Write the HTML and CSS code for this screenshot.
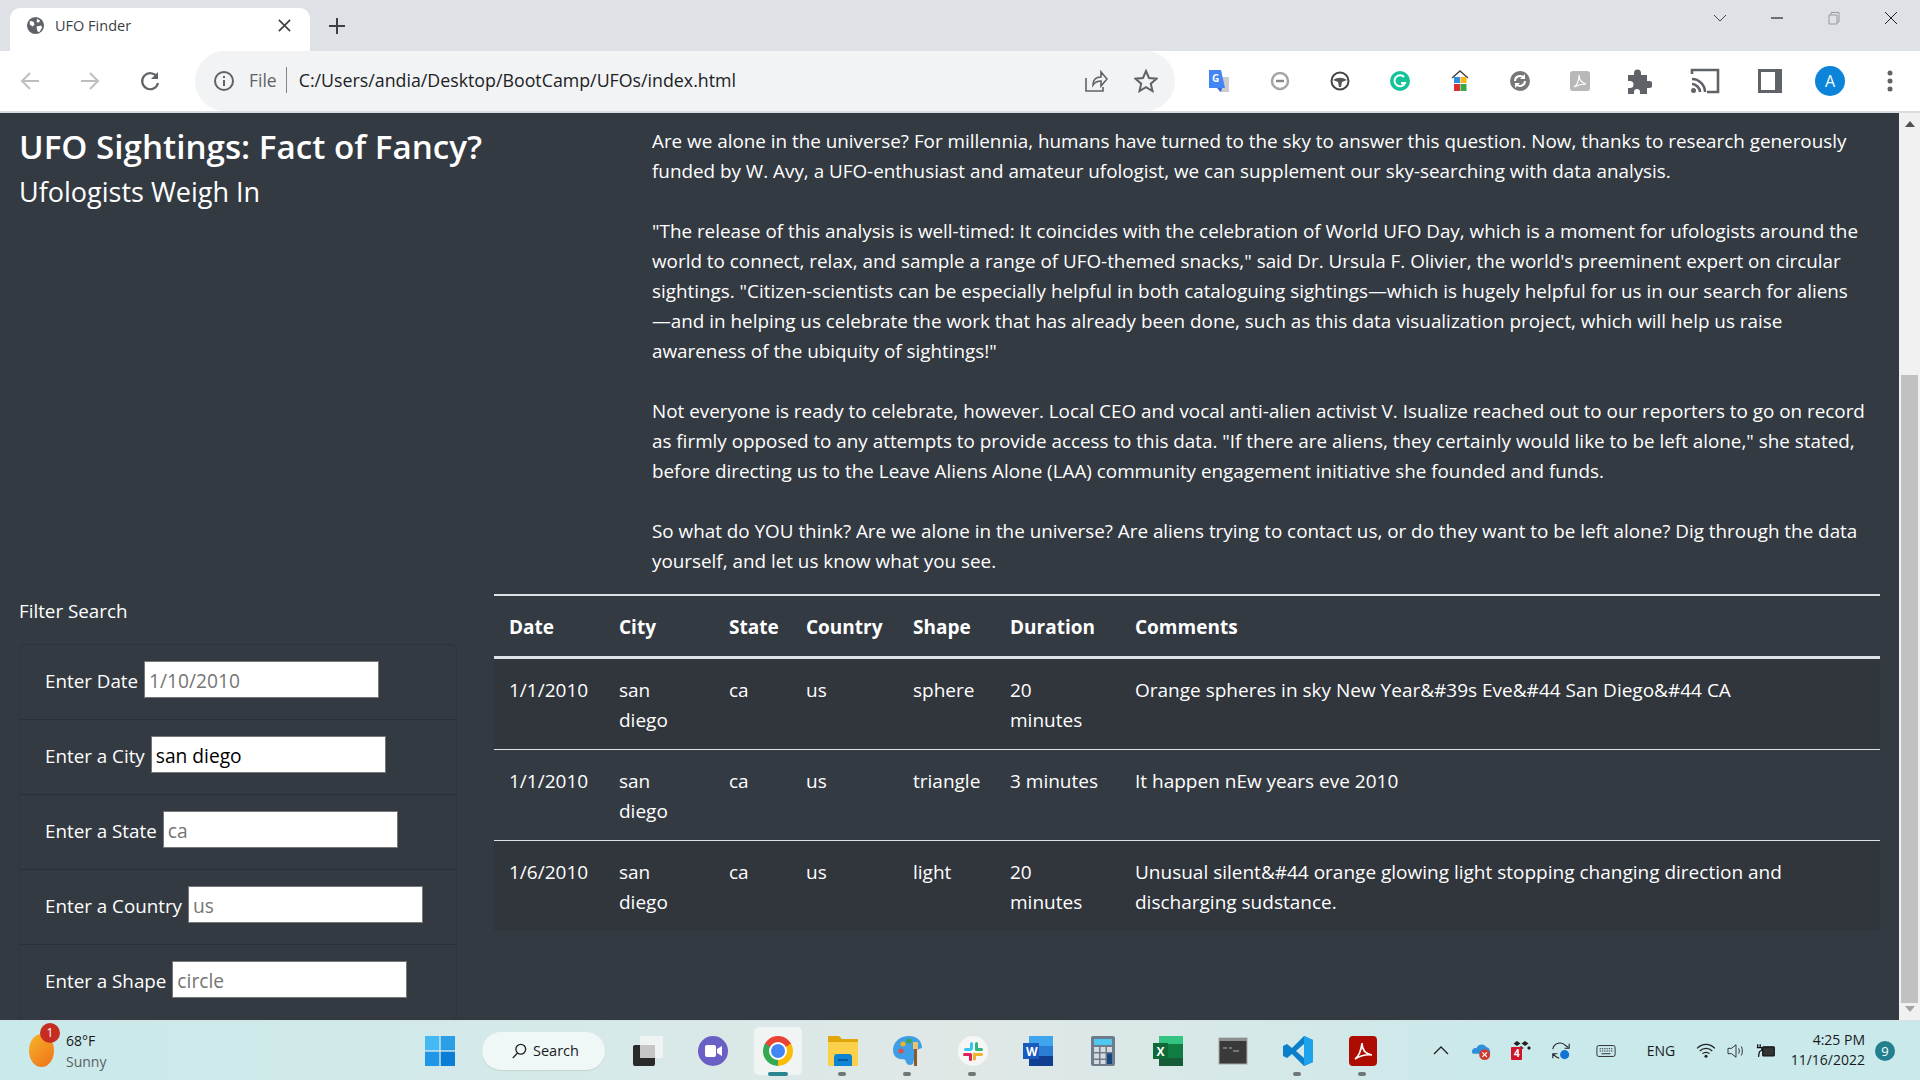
FILE: index.html
```html
<!DOCTYPE html>
<html lang="en">
<head>
    <meta charset="UTF-8">
    <title>UFO Finder</title>
    <link rel="stylesheet" href="styles.css">
</head>
<body>
    <div class="tabstrip">
        <div class="tab">
            <svg class="tab-icon" viewBox="0 0 20 20"><circle cx="10" cy="10" r="9" fill="#5f6368"/><path d="M4 5l4 1 1 3-2 2-3-2zM12 3l3 2-2 2-2-1zM11 11l5-1 1 2-3 5-2-1z" fill="#fff"/></svg>
            <span class="tab-title">UFO Finder</span>
            <svg class="tab-close" viewBox="0 0 16 16"><path d="M2 2l12 12M14 2L2 14" stroke="#3c4043" stroke-width="1.7" fill="none"/></svg>
        </div>
        <svg class="new-tab" viewBox="0 0 18 18"><path d="M9 1v16M1 9h16" stroke="#3c4043" stroke-width="2" fill="none"/></svg>
        <div class="window-controls">
            <svg viewBox="0 0 14 14"><path d="M1 4l6 6 6-6" stroke="#444" fill="none"/></svg>
            <svg viewBox="0 0 14 14"><path d="M1 7h12" stroke="#222" stroke-width="1.2" fill="none"/></svg>
            <svg viewBox="0 0 14 14"><path d="M2 4h8v9H2zM4 4V1.500h8V11h-2" stroke="#999" fill="none"/></svg>
            <svg viewBox="0 0 14 14"><path d="M1 1l12 12M13 1L1 13" stroke="#222" fill="none"/></svg>
        </div>
    </div>

    <div class="toolbar">
        <div class="nav-buttons">
            <svg viewBox="0 0 22 22"><path d="M20 11H3M11 3l-8 8 8 8" stroke="#bdbfc2" stroke-width="2" fill="none"/></svg>
            <svg viewBox="0 0 22 22"><path d="M2 11h17M11 3l8 8-8 8" stroke="#bdbfc2" stroke-width="2" fill="none"/></svg>
            <svg viewBox="0 0 22 22"><path d="M18 7a8 8 0 1 0 1 6" stroke="#5f6368" stroke-width="2.200" fill="none"/><path d="M19 2v7h-7z" fill="#5f6368"/></svg>
        </div>
        <div class="omnibox">
            <svg class="info-icon" viewBox="0 0 22 22"><circle cx="11" cy="11" r="9" stroke="#5f6368" stroke-width="2" fill="none"/><path d="M11 10v6M11 6v2" stroke="#5f6368" stroke-width="2"/></svg>
            <span class="omni-file">File</span>
            <span class="omni-url">C:/Users/andia/Desktop/BootCamp/UFOs/index.html</span>
            <svg class="omni-share" viewBox="0 0 24 24"><path d="M2 9v13h17v-4M9 16c0-6 4-8 8-8V3l6 7-6 7v-5c-3 0-6 1-8 4z" stroke="#5f6368" stroke-width="1.600" fill="none"/></svg>
            <svg class="omni-star" viewBox="0 0 24 24"><path d="M12 2l3 7 7.500.7-5.700 5 1.700 7.300-6.500-3.900L5.500 22l1.700-7.300-5.700-5L9 9z" stroke="#5f6368" stroke-width="2" fill="none"/></svg>
        </div>
        <div class="extensions">
            <svg viewBox="0 0 24 24"><path d="M10 8h12v15H12z" fill="#ccc"/><path d="M2 1h12l4 18H2z" fill="#4285f4"/><path d="M10 19l4 4 1-4z" fill="#3367d6"/><text x="5" y="13" class="ext-letter">G</text></svg>
            <svg viewBox="0 0 24 24"><circle cx="12" cy="12" r="8" stroke="#a5a5a5" stroke-width="2.500" fill="none"/><path d="M8 12h8" stroke="#888" stroke-width="2.500"/></svg>
            <svg viewBox="0 0 24 24"><circle cx="12" cy="12" r="8.500" stroke="#444" stroke-width="2" fill="#fff"/><path d="M5 11c5-3 9-3 14 0l-5 2-1 5h-2l-1-5z" fill="#555"/></svg>
            <svg viewBox="0 0 24 24"><circle cx="12" cy="12" r="10" fill="#15c39a"/><path d="M16 8a5.500 5.500 0 1 0 1 6h-4" stroke="#fff" stroke-width="2" fill="none"/></svg>
            <svg viewBox="0 0 24 24"><path d="M4 9l8-7 8 7" stroke="#444" stroke-width="1.500" fill="none"/><rect x="6" y="8" width="6" height="6" fill="#2a8fe0"/><rect x="12.500" y="8" width="6" height="6" fill="#f5b51b"/><rect x="6" y="15" width="6" height="7" fill="#d9302c"/><rect x="12.500" y="15" width="6" height="7" fill="#3aa64a"/></svg>
            <svg viewBox="0 0 24 24"><circle cx="12" cy="12" r="10" fill="#777"/><path d="M7 12a5 5 0 0 1 9-3M17 12a5 5 0 0 1-9 3" stroke="#fff" stroke-width="2" fill="none"/><path d="M17 5v5h-5zM7 19v-5h5z" fill="#fff"/></svg>
            <svg viewBox="0 0 24 24"><rect x="2" y="2" width="20" height="20" rx="3" fill="#b8b8b8"/><path d="M6 18c3-2 5-7 5-12 0 5 3 8 7 9-4 0-8 1-12 3z" stroke="#fff" stroke-width="1.200" fill="none"/></svg>
            <svg viewBox="0 0 28 28"><path d="M4 8h6V6a3.500 3.500 0 0 1 7 0v2h6v6h2a3.500 3.500 0 0 1 0 7h-2v6h-7v-2a3 3 0 0 0-6 0v2H4v-6h2a3.500 3.500 0 0 0 0-7H4z" fill="#5f6368"/></svg>
            <svg viewBox="0 0 30 28"><path d="M2 7V3h26v22H17M2 12c7 0 13 6 13 13M2 17c4 0 8 4 8 8" stroke="#5f6368" stroke-width="2.600" fill="none"/><circle cx="3.500" cy="23.500" r="2.500" fill="#5f6368"/></svg>
            <svg viewBox="0 0 28 28"><path d="M2 2h24v24H2z" fill="#5f6368"/><rect x="5" y="5" width="14" height="18" fill="#fff"/></svg>
            <div class="avatar">A</div>
            <svg viewBox="0 0 24 24"><circle cx="12" cy="4" r="2.500" fill="#5f6368"/><circle cx="12" cy="12" r="2.500" fill="#5f6368"/><circle cx="12" cy="20" r="2.500" fill="#5f6368"/></svg>
        </div>
    </div>

    <div class="viewport">
        <main class="page">
            <section class="intro-row">
                <header class="intro-title">
                    <h1>UFO Sightings: Fact of Fancy?</h1>
                    <h2>Ufologists Weigh In</h2>
                </header>
                <article class="article">
                    <p>Are we alone in the universe? For millennia, humans have turned to the sky to answer this question. Now, thanks to research generously funded by W. Avy, a UFO-enthusiast and amateur ufologist, we can supplement our sky-searching with data analysis.</p>
                    <p>"The release of this analysis is well-timed: It coincides with the celebration of World UFO Day, which is a moment for ufologists around the world to connect, relax, and sample a range of UFO-themed snacks," said Dr. Ursula F. Olivier, the world's preeminent expert on circular sightings. "Citizen-scientists can be especially helpful in both cataloguing sightings—which is hugely helpful for us in our search for aliens<br>—and in helping us celebrate the work that has already been done, such as this data visualization project, which will help us raise<br>awareness of the ubiquity of sightings!"</p>
                    <p>Not everyone is ready to celebrate, however. Local CEO and vocal anti-alien activist V. Isualize reached out to our reporters to go on record as firmly opposed to any attempts to provide access to this data. "If there are aliens, they certainly would like to be left alone," she stated, before directing us to the Leave Aliens Alone (LAA) community engagement initiative she founded and funds.</p>
                    <p>So what do YOU think? Are we alone in the universe? Are aliens trying to contact us, or do they want to be left alone? Dig through the data yourself, and let us know what you see.</p>
                </article>
            </section>

            <section class="data-row">
                <aside class="filters">
                    <div class="filters-title">Filter Search</div>
                    <ul class="filter-list">
                        <li><label for="date">Enter Date</label><input id="date" type="text" placeholder="1/10/2010"></li>
                        <li><label for="city">Enter a City</label><input id="city" type="text" value="san diego"></li>
                        <li><label for="state">Enter a State</label><input id="state" type="text" placeholder="ca"></li>
                        <li><label for="country">Enter a Country</label><input id="country" type="text" placeholder="us"></li>
                        <li><label for="shape">Enter a Shape</label><input id="shape" type="text" placeholder="circle"></li>
                    </ul>
                </aside>
                <div class="table-wrap">
                    <table class="ufo-table">
                        <colgroup>
                            <col class="col-date"><col class="col-city"><col class="col-state"><col class="col-country"><col class="col-shape"><col class="col-duration"><col>
                        </colgroup>
                        <thead>
                            <tr><th>Date</th><th>City</th><th>State</th><th>Country</th><th>Shape</th><th>Duration</th><th>Comments</th></tr>
                        </thead>
                        <tbody>
                            <tr><td>1/1/2010</td><td>san diego</td><td>ca</td><td>us</td><td>sphere</td><td>20 minutes</td><td>Orange spheres in sky New Year&amp;#39s Eve&amp;#44 San Diego&amp;#44 CA</td></tr>
                            <tr><td>1/1/2010</td><td>san diego</td><td>ca</td><td>us</td><td>triangle</td><td>3 minutes</td><td>It happen nEw years eve 2010</td></tr>
                            <tr><td>1/6/2010</td><td>san diego</td><td>ca</td><td>us</td><td>light</td><td>20 minutes</td><td>Unusual silent&amp;#44 orange glowing light stopping changing direction and discharging sudstance.</td></tr>
                        </tbody>
                    </table>
                </div>
            </section>
        </main>
        <div class="scrollbar">
            <span class="arrow-up"></span>
            <div class="scroll-track"><div class="scroll-thumb"></div></div>
            <span class="arrow-down"></span>
        </div>
    </div>

    <footer class="taskbar">
        <div class="weather">
            <div class="weather-icon"><span class="weather-badge">1</span></div>
            <div class="weather-text">
                <div>68°F</div>
                <div class="weather-sub">Sunny</div>
            </div>
        </div>
        <div class="task-slot">
            <svg class="task-icon" viewBox="0 0 30 30"><rect x="0" y="0" width="14.300" height="14.300" fill="#45b9f3"/><rect x="15.700" y="0" width="14.300" height="14.300" fill="#2a9fe8"/><rect x="0" y="15.700" width="14.300" height="14.300" fill="#1f97e6"/><rect x="15.700" y="15.700" width="14.300" height="14.300" fill="#0a7dd6"/></svg>
        </div>
        <div class="search-pill">
            <svg viewBox="0 0 18 18"><circle cx="11" cy="7" r="5.500" stroke="#222" stroke-width="1.500" fill="none"/><path d="M7 11.500L2 17" stroke="#222" stroke-width="1.600"/></svg>
            <span>Search</span>
        </div>
        <div class="task-slot">
            <svg class="task-icon" viewBox="0 0 30 30"><rect x="0" y="9" width="22" height="21" rx="2" fill="#2a2a2a"/><rect x="7" y="0" width="23" height="22" fill="#f0f3f3"/><rect x="7" y="9" width="15" height="13" fill="#c6c6c6"/></svg>
        </div>
        <div class="task-slot">
            <svg class="task-icon" viewBox="0 0 30 30"><circle cx="15" cy="15" r="15" fill="#6a5fc4"/><rect x="7" y="9" width="11" height="12" rx="2" fill="#fff"/><path d="M19 13l5-3v10l-5-3z" fill="#fff"/></svg>
        </div>
        <div class="task-slot is-active">
            <div class="chrome-logo"></div>
            <span class="task-bar"></span>
        </div>
        <div class="task-slot">
            <svg class="task-icon" viewBox="0 0 30 30"><path d="M0 0h11l3 3h16v27H0z" fill="#e0a60c"/><rect x="0" y="6" width="30" height="24" fill="#fbd04b"/><path d="M6 30V21a3 3 0 0 1 3-3h12a3 3 0 0 1 3 3v9z" fill="#0f83d4"/><rect x="10" y="23" width="10" height="2" fill="#055c9d"/></svg>
            <span class="task-dot"></span>
        </div>
        <div class="task-slot">
            <svg class="task-icon" viewBox="0 0 30 30"><path d="M16 0c9 0 13 6 13 12l-6 2-3 14c-3 2-6 1-7-2-1-4-3-2-6-3-5-1-7-5-7-9C0 6 7 0 16 0z" fill="#3e9fe6"/><circle cx="8" cy="15" r="2.500" fill="#e8493d"/><circle cx="10" cy="8" r="2.500" fill="#f2b31b"/><circle cx="16" cy="5" r="2.500" fill="#3aa64a"/><rect x="21" y="12" width="3" height="18" fill="#8a5a2b"/><rect x="20" y="6" width="5" height="7" fill="#e9c46a"/></svg>
            <span class="task-dot"></span>
        </div>
        <div class="task-slot">
            <svg class="task-icon" viewBox="0 0 30 30"><circle cx="15" cy="15" r="15" fill="#f6f6f6"/><rect x="12" y="6" width="3" height="8" rx="1.500" fill="#36c5f0"/><rect x="6" y="12" width="8" height="3" rx="1.500" fill="#36c5f0"/><rect x="17" y="6" width="3" height="8" rx="1.500" fill="#2eb67d"/><rect x="17" y="12" width="8" height="3" rx="1.500" fill="#2eb67d"/><rect x="15" y="16.500" width="3" height="8" rx="1.500" fill="#ecb22e"/><rect x="17" y="17" width="8" height="3" rx="1.500" fill="#ecb22e"/><rect x="11" y="17" width="3" height="8" rx="1.500" fill="#e01e5a"/><rect x="5" y="17" width="8" height="3" rx="1.500" fill="#e01e5a"/></svg>
            <span class="task-dot"></span>
        </div>
        <div class="task-slot">
            <svg class="task-icon" viewBox="0 0 30 30"><rect x="6" y="0" width="24" height="10" fill="#41a5ee"/><rect x="6" y="10" width="24" height="10" fill="#2b7cd3"/><rect x="6" y="20" width="24" height="10" fill="#103f91"/><rect x="0" y="7" width="16" height="16" fill="#185abd"/><text x="3" y="20" class="tile-letter">W</text></svg>
        </div>
        <div class="task-slot">
            <svg class="task-icon" viewBox="0 0 24 30"><rect width="24" height="30" rx="2" fill="#6e7b8a"/><rect x="3" y="3" width="18" height="6" fill="#4fc7f0"/><path d="M3 11h5v5H3zM9.500 11h5v5h-5zM16 11h5v5h-5zM3 17.500h5v5H3zM9.500 17.500h5v5h-5zM3 24h5v4H3zM9.500 24h5v4h-5z" fill="#d5dade"/><rect x="16" y="17.500" width="5" height="10.500" fill="#14497f"/></svg>
        </div>
        <div class="task-slot">
            <svg class="task-icon" viewBox="0 0 30 30"><rect x="6" y="0" width="24" height="8" fill="#33c481"/><rect x="6" y="8" width="24" height="15" fill="#107c41"/><rect x="6" y="22" width="24" height="8" fill="#185c37"/><rect x="0" y="7" width="15" height="16" fill="#0e6b38"/><text x="3.500" y="20" class="tile-letter">X</text></svg>
        </div>
        <div class="task-slot">
            <svg class="task-icon" viewBox="0 0 30 30"><rect x="1" y="2" width="28" height="26" fill="#3a3a3a" stroke="#a8a8a8"/><rect x="1" y="2" width="28" height="3" fill="#8e8e8e"/><path d="M5 12h4M11 12h3M15 15h6" stroke="#888" stroke-width="1.400"/></svg>
        </div>
        <div class="task-slot">
            <svg class="task-icon" viewBox="0 0 30 30"><path d="M21 0l9 4v22l-9 4-12-12-5 4-4-2V10l4-2 5 4zM21 8l-8 7 8 7z" fill="#0a7fcc"/><path d="M21 0l9 4v22l-9 4z" fill="#1ca3ec"/></svg>
            <span class="task-dot"></span>
        </div>
        <div class="task-slot">
            <svg class="task-icon" viewBox="0 0 30 30"><rect width="28" height="30" x="1" rx="4" fill="#ae0c00"/><path d="M7 23c3-2 6-8 7-16 0 7 4 11 10 12-6-1-12 1-17 4z" stroke="#fff" stroke-width="1.700" fill="none"/></svg>
            <span class="task-dot"></span>
        </div>

        <div class="tray">
            <svg class="tray-icon" viewBox="0 0 20 20"><path d="M3 13l7-7 7 7" stroke="#222" stroke-width="1.300" fill="none"/></svg>
            <svg class="tray-icon" viewBox="0 0 22 20"><path d="M1 11c0-3 3-5 5-4 1-5 9-6 11-1 2 0 4 2 4 5v2H2z" fill="#2f8fdd"/><circle cx="15" cy="14" r="6" fill="#d03a2f"/><path d="M12.500 11.500l5 5M17.500 11.500l-5 5" stroke="#fff" stroke-width="1.300"/></svg>
            <svg class="tray-icon" viewBox="0 0 20 20"><path d="M6 0l3.500 2.500L6 5 2.500 2.500zM14 0l3.500 2.500L14 5l-3.500-2.500zM10 5l2.500 2L10 9 7.500 7zM18 5l2 2-2 2-2-2z" fill="#222"/><rect x="0" y="6" width="11" height="13" rx="1" fill="#d0142c"/><text x="3" y="16" class="tray-four">4</text></svg>
            <svg class="tray-icon" viewBox="0 0 22 22"><path d="M2 9a8 8 0 0 1 14-4l3 2M20 3v5h-5" stroke="#222" stroke-width="1.200" fill="none"/><path d="M2 19v-5h5M2 14l3 3 4 2" stroke="#222" stroke-width="1.200" fill="none"/><circle cx="15" cy="15" r="5" fill="#1173d4"/></svg>
            <svg class="tray-icon tray-wide" viewBox="0 0 22 14"><rect x="1" y="1" width="20" height="12" rx="2" stroke="#222" fill="none"/><path d="M4 4.500h14M4 7h14" stroke="#222" stroke-dasharray="1.500 1"/><path d="M6 10h10" stroke="#222"/></svg>
            <span class="tray-lang">ENG</span>
            <svg class="tray-small" viewBox="0 0 22 18"><path d="M1 6c6-6 14-6 20 0M4 9c4-4 10-4 14 0M7 12c2-2 6-2 8 0" stroke="#222" stroke-width="1.400" fill="none"/><circle cx="11" cy="15" r="1.700" fill="#222"/></svg>
            <svg class="tray-small" viewBox="0 0 22 18"><path d="M2 6h4l5-4v14l-5-4H2z" stroke="#222" fill="none"/><path d="M14 6c1 2 1 4 0 6M17 4c1.500 3 1.500 7 0 10" stroke="#222" fill="none"/></svg>
            <svg class="tray-small" viewBox="0 0 24 18"><rect x="8" y="4" width="14" height="11" rx="1" stroke="#111" stroke-width="1.300" fill="#333"/><path d="M5 1v4M2 1v4M1 5h6v3l-3 2-1 6" stroke="#111" stroke-width="1.500" fill="none"/></svg>
            <div class="clock">
                <div>4:25 PM</div>
                <div>11/16/2022</div>
            </div>
            <div class="notif">9</div>
        </div>
    </footer>
</body>
</html>
```

FILE: styles.css
```css
* {
    box-sizing: border-box;
}
html, body {
    height: 100%;
}
body {
    margin: 0;
    display: flex;
    flex-direction: column;
    overflow: hidden;
    font-family: "Open Sans", "Noto Sans", sans-serif;
    background-color: #343a42;
    color: #fff;
}
svg {
    display: block;
    flex: none;
}

/* browser chrome */
.tabstrip {
    height: 51px;
    flex: none;
    display: flex;
    align-items: center;
    background-color: #dee1e6;
    padding-left: 10px;
}
.tab {
    width: 300px;
    height: 43px;
    margin-top: 8px;
    padding: 0 18px 8px 16px;
    display: flex;
    align-items: center;
    background: #fff;
    border-radius: 10px 10px 0 0;
}
.tab-icon {
    width: 19px;
    height: 19px;
    margin-right: 10px;
}
.tab-title {
    flex: 1;
    font-size: 14.500px;
    color: #3c4043;
}
.tab-close {
    width: 15px;
    height: 15px;
}
.new-tab {
    width: 18px;
    height: 18px;
    margin-left: 18px;
}
.window-controls {
    margin-left: auto;
    display: flex;
    gap: 43px;
    padding-right: 22px;
    margin-top: -15px;
}
.window-controls svg {
    width: 14px;
    height: 14px;
}
.toolbar {
    height: 62px;
    flex: none;
    display: flex;
    background: #fff;
    border-bottom: 2px solid #dadce0;
}
.nav-buttons {
    width: 195px;
    padding-left: 19px;
    display: flex;
    align-items: center;
    gap: 38px;
}
.nav-buttons svg {
    width: 22px;
    height: 22px;
}
.omnibox {
    width: 980px;
    display: flex;
    align-items: center;
    padding: 0 17px 0 18px;
    background-color: #f1f3f4;
    border-radius: 30px;
}
.info-icon {
    width: 22px;
    height: 22px;
    margin-right: 14px;
}
.omni-file {
    font-size: 17.500px;
    color: #5f6368;
    padding-right: 9px;
    margin-right: 12px;
    border-right: 1px solid #80868b;
    line-height: 26px;
    position: relative;
    top: -1px;
}
.omni-url {
    flex: 1;
    font-size: 17.800px;
    color: #202124;
    position: relative;
    top: -1px;
}
.omni-share {
    width: 24px;
    height: 24px;
    margin-right: 26px;
}
.omni-star {
    width: 24px;
    height: 24px;
}
.extensions {
    flex: 1;
    display: flex;
    align-items: center;
}
.extensions > * {
    width: 24px;
    height: 24px;
    margin-left: 36px;
}
.extensions > :first-child {
    margin-left: 32px;
}
.extensions > :nth-child(2) {
    margin-left: 37px;
}
.extensions > :nth-child(8) {
    width: 28px;
    height: 28px;
    margin-left: 32px;
}
.extensions > :nth-child(9) {
    width: 30px;
    height: 28px;
    margin-left: 38px;
}
.extensions > :nth-child(10) {
    width: 28px;
    height: 28px;
    margin-left: 36px;
}
.ext-letter {
    font-size: 10px;
    font-weight: 700;
    fill: #fff;
}
.extensions .avatar {
    width: 30px;
    height: 30px;
    margin-left: 31px;
    border-radius: 50%;
    background-color: #0b84d9;
    color: #fff;
    font-size: 16px;
    line-height: 30px;
    text-align: center;
}
.extensions > :last-child {
    margin-left: 33px;
}

/* page */
.viewport {
    flex: 1;
    min-height: 0;
    display: flex;
}
.page {
    flex: 1;
    min-width: 0;
    overflow: hidden;
    padding-top: 13px;
    font-size: 18.800px;
    line-height: 30px;
}
.intro-row {
    display: flex;
}
.intro-title {
    width: 652px;
    padding-left: 19px;
    margin-top: -2px;
}
h1 {
    margin: 0;
    font-size: 33.200px;
    font-weight: 600;
    line-height: 46px;
}
h2 {
    margin: 2px 0 0;
    font-size: 27px;
    font-weight: 400;
    line-height: 40px;
}
.article {
    flex: 1;
    font-size: 18.850px;
    padding-right: 18px;
}
.article p {
    margin: 0 0 30px;
}
.article p:last-child {
    margin-bottom: 0;
}
.data-row {
    display: flex;
    margin-top: 18px;
}
.filters {
    width: 494px;
    flex: none;
    padding: 2px 0 0 19px;
}
.filters-title {
    margin-bottom: 18px;
}
.filter-list {
    width: 438px;
    margin: 0;
    padding: 0;
    list-style: none;
    border: 1px solid #2f333a;
    border-radius: 6px;
}
.filter-list li {
    height: 75px;
    display: flex;
    align-items: flex-start;
    padding: 16px 0 0 25px;
    border-bottom: 1px solid #2c3036;
}
.filter-list li:last-child {
    border-bottom: none;
}
.filter-list label {
    margin-right: 6px;
    padding-top: 5px;
}
.filter-list input {
    width: 235px;
    height: 37px;
    padding: 2px 4px 0;
    border: 1px solid #767676;
    background: #fff;
    color: #000;
    font: inherit;
    font-size: 19.200px;
}
.filter-list input::placeholder {
    color: #757575;
    opacity: 1;
}
.table-wrap {
    width: 1386px;
    flex: none;
}
.ufo-table {
    width: 100%;
    table-layout: fixed;
    border-collapse: collapse;
    font-size: 19px;
}
.col-date {
    width: 110px;
}
.col-city {
    width: 110px;
}
.col-state {
    width: 77px;
}
.col-country {
    width: 107px;
}
.col-shape {
    width: 97px;
}
.col-duration {
    width: 125px;
}
.ufo-table th, .ufo-table td {
    padding: 15.500px 15px 14.500px;
    text-align: left;
    vertical-align: top;
}
.ufo-table th {
    font-weight: 700;
    padding: 16px 15px 14px;
    border-top: 2px solid #dee2e6;
    border-bottom: 3px solid #dee2e6;
}
.ufo-table td {
    border-top: 1px solid #dee2e6;
}
.ufo-table tbody tr:first-child td {
    border-top: none;
}
.ufo-table tbody tr:nth-child(odd) {
    background-color: #31353c;
}
.scrollbar {
    width: 21px;
    flex: none;
    display: flex;
    flex-direction: column;
    align-items: center;
    background-color: #f1f1f1;
    padding: 8px 2px;
}
.arrow-up, .arrow-down {
    width: 0;
    height: 0;
    flex: none;
    border-left: 5px solid transparent;
    border-right: 5px solid transparent;
}
.arrow-up {
    border-bottom: 6px solid #505050;
}
.arrow-down {
    border-top: 6px solid #a3a3a3;
}
.scroll-track {
    flex: 1;
    width: 100%;
    padding: 248px 0 3px;
}
.scroll-thumb {
    height: 100%;
    background-color: #c1c1c1;
}

/* taskbar */
.taskbar {
    height: 60px;
    flex: none;
    display: flex;
    align-items: center;
    color: #1a1a1a;
    background: linear-gradient(90deg, #c9e9ea 0%, #d6e9e9 30%, #e0e8e6 50%, #d6e8e8 65%, #c9e9eb 80%, #c9e9eb 100%);
    border-top: 1px solid #d3e3e3;
}
.weather {
    width: 407px;
    flex: none;
    display: flex;
    align-items: center;
    padding-left: 29px;
}
.weather-icon {
    position: relative;
    width: 25px;
    height: 33px;
    margin-right: 12px;
    border-radius: 50%;
    background: linear-gradient(135deg, #f5b428, #f0711a);
}
.weather-badge {
    position: absolute;
    top: -11px;
    left: 11px;
    width: 20px;
    height: 20px;
    border-radius: 50%;
    background-color: #c62d22;
    color: #fff;
    font-size: 12px;
    line-height: 20px;
    text-align: center;
}
.weather-text {
    font-size: 14px;
    line-height: 21px;
}
.weather-sub {
    color: #5a5f60;
}
.task-slot {
    position: relative;
    width: 65px;
    height: 48px;
    flex: none;
    display: flex;
    align-items: center;
    justify-content: center;
}
.task-icon {
    width: 30px;
    height: 30px;
}
.is-active::before {
    content: "";
    position: absolute;
    top: 0;
    bottom: 0;
    left: 9px;
    right: 8px;
    border-radius: 5px;
    background-color: #f0f4f3;
}
.chrome-logo {
    position: relative;
    width: 30px;
    height: 30px;
    border-radius: 50%;
    background: conic-gradient(from -60deg, #ea4335 0 120deg, #fbbc05 120deg 240deg, #34a853 240deg 360deg);
}
.chrome-logo::after {
    content: "";
    position: absolute;
    top: 8px;
    left: 8px;
    width: 14px;
    height: 14px;
    border-radius: 50%;
    background-color: #4285f4;
    box-shadow: 0 0 0 2px #fff;
}
.task-bar {
    position: absolute;
    left: 23px;
    bottom: -1px;
    width: 20px;
    height: 4px;
    border-radius: 2px;
    background-color: #2a8591;
}
.task-dot {
    position: absolute;
    left: 28px;
    bottom: -1px;
    width: 8px;
    height: 4px;
    border-radius: 2px;
    background-color: #707575;
}
.tile-letter {
    font-size: 12px;
    font-weight: 700;
    fill: #fff;
}
.tray-four {
    font-size: 10px;
    font-weight: 700;
    fill: #fff;
}
.search-pill {
    width: 123px;
    height: 38px;
    flex: none;
    margin: 0 10px;
    display: flex;
    align-items: center;
    gap: 6px;
    padding-left: 29px;
    border-radius: 19px;
    background-color: #eff7f7;
    box-shadow: 0 1px 1px #c6d3d3;
    font-size: 14.500px;
}
.search-pill svg {
    width: 16px;
    height: 16px;
}
.tray {
    margin-left: auto;
    display: flex;
    align-items: center;
    padding-right: 25px;
}
.tray-icon {
    width: 20px;
    height: 20px;
    margin: 0 10px;
}
.tray-wide {
    width: 20px;
    margin: 0 15px;
}
.tray-lang {
    width: 60px;
    font-size: 14px;
    text-align: center;
}
.tray-small {
    width: 20px;
    height: 16px;
    margin: 0 5px;
}
.clock {
    width: 84px;
    font-size: 14px;
    line-height: 20px;
    text-align: right;
    white-space: nowrap;
    margin-top: -2px;
}
.notif {
    width: 20px;
    height: 20px;
    margin-left: 10px;
    border-radius: 50%;
    background-color: #217f8e;
    color: #fff;
    font-size: 13px;
    line-height: 20px;
    text-align: center;
}
```
